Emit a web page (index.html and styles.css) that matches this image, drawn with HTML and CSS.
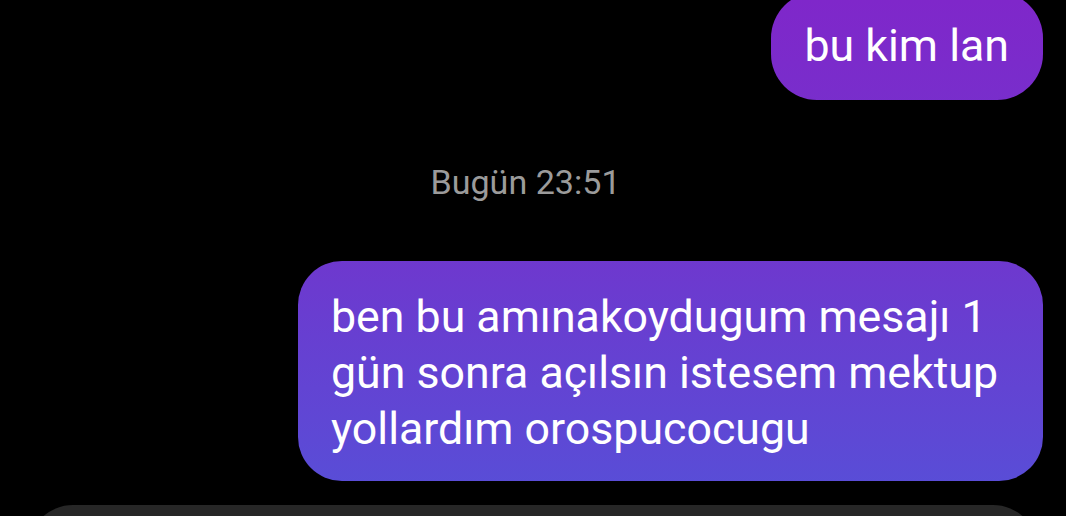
FILE: index.html
```html
<!DOCTYPE html>
<html lang="tr">
<head>
<meta charset="utf-8">
<title>Mesajlar</title>
<link rel="stylesheet" href="styles.css">
</head>
<body>
<main class="chat">
  <div class="row row-out">
    <div class="bubble bubble-first">bu kim lan</div>
  </div>
  <div class="stamp">Bugün 23:51</div>
  <div class="row row-out">
    <div class="bubble bubble-long">ben bu amınakoydugum mesajı 1<br>gün sonra açılsın istesem mektup<br>yollardım orospucocugu</div>
  </div>
  <footer class="composer-wrap">
    <div class="composer"></div>
  </footer>
</main>
</body>
</html>
```
FILE: styles.css
```css
html, body {
  margin: 0;
  padding: 0;
  background: #000;
  height: 516px;
  overflow: hidden;
}
.chat {
  display: flex;
  flex-direction: column;
  font-family: Roboto, "Noto Sans", sans-serif;
}
.row {
  display: flex;
}
.row-out {
  justify-content: flex-end;
  padding-right: 23px;
}
.bubble {
  color: #fff;
  font-size: 44.7px;
  line-height: 56px;
  padding: 26px 34px;
  border-radius: 46px;
  background: linear-gradient(180deg, #7f27ca 0px, #6e38ce 260px, #5650d8 516px);
  background-attachment: fixed;
  white-space: nowrap;
}
.bubble-first {
  margin-top: -8px;
}
.bubble-long {
  width: 677px;
  padding: 28px 35px 24px 33px;
  border-radius: 44px;
}
.stamp {
  margin: 62px 0 59px;
  padding-right: 15px;
  text-align: center;
  color: #9b9b9b;
  font-size: 34.1px;
  line-height: 40px;
}
.composer-wrap {
  margin-top: 24px;
  height: 11px;
  overflow: hidden;
  padding: 0 28px;
}
.composer {
  height: 90px;
  border-radius: 46px;
  background: #272727;
}
```
